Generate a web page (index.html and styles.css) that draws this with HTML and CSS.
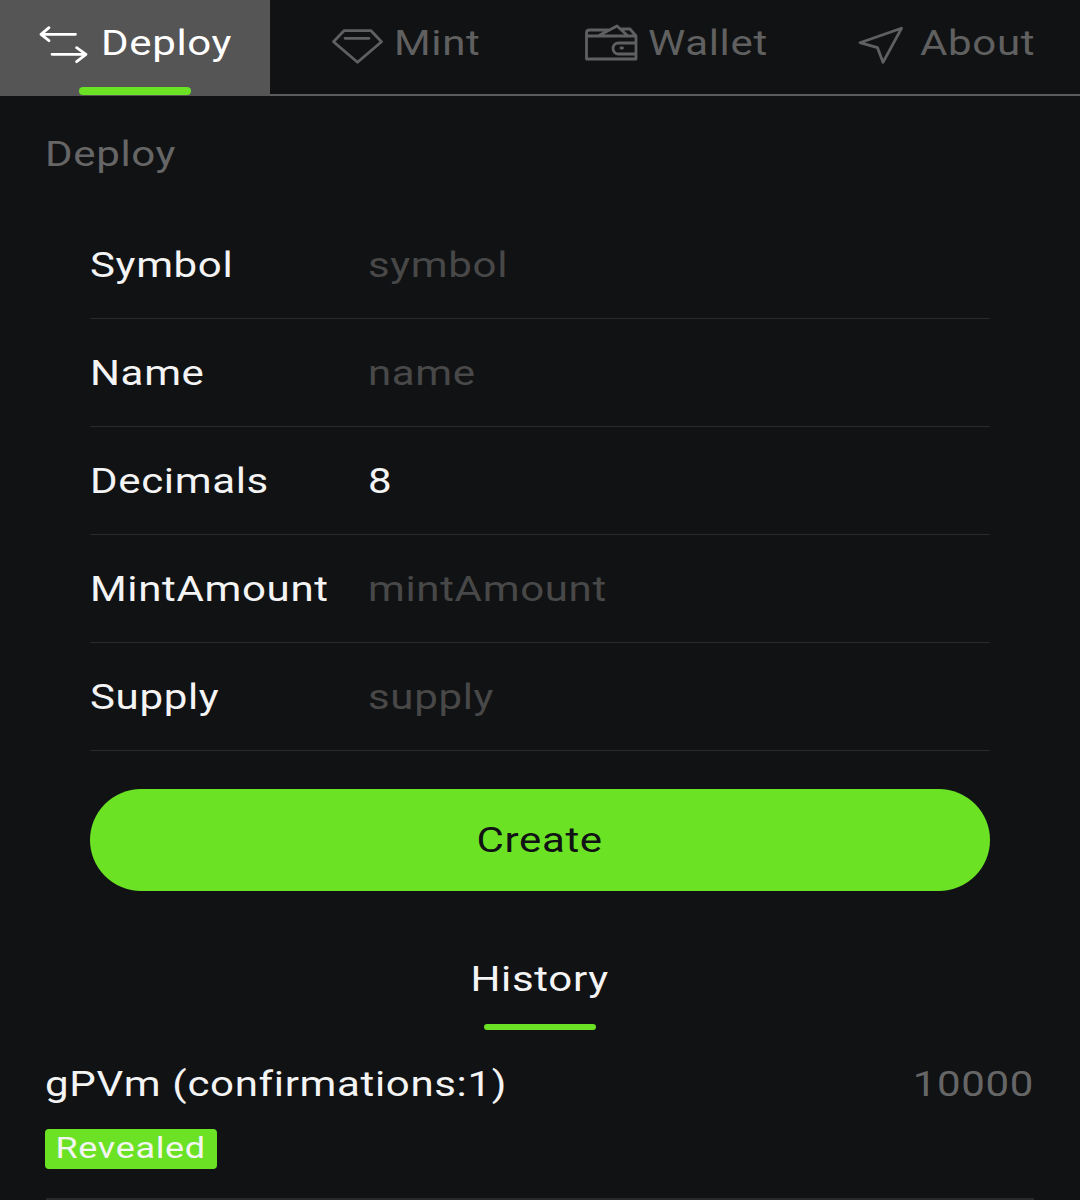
FILE: index.html
```html
<!DOCTYPE html>
<html lang="en">
<head>
<meta charset="utf-8">
<title>Deploy</title>
<link rel="stylesheet" href="styles.css">
</head>
<body>
<nav class="tabs">
  <a class="tab active">
    <svg class="icon" width="50" height="40" viewBox="0 0 50 40"><path d="M36.5 11.3H2M10 4.7L2 11.3L10 17.7M13 31.3H47M37.6 24.7L47 31.3L37.6 38.7"/></svg>
    <span class="wide">Deploy</span>
  </a>
  <a class="tab tab-mint">
    <svg class="icon" width="50" height="40" viewBox="0 0 50 40"><path d="M.5 18.7L11 7.7H38L48.5 18.7L24.5 39.3ZM12 15.3H36"/></svg>
    <span class="wide">Mint</span>
  </a>
  <a class="tab tab-wallet">
    <svg class="icon" width="52" height="40" viewBox="0 0 52 40"><path d="M1.5 13V10Q1.5 7 4.5 7H23M13 13L32 3L43 13M37 6H45L51 13M1.5 13V36H51V31M51 20V13H1.5M51 20H33.5A5.5 5.5 0 0 0 33.5 31H51ZM36 25H37.5"/></svg>
    <span class="wide">Wallet</span>
  </a>
  <a class="tab tab-about">
    <svg class="icon" width="50" height="40" viewBox="0 0 50 40"><path d="M2 19.7L43.5 5.3L25 39.3L19.5 24.7Z"/></svg>
    <span class="wide">About</span>
  </a>
</nav>

<h1 class="section-title"><span class="wide">Deploy</span></h1>

<form class="form">
  <label class="row"><span class="label"><span class="wide">Symbol</span></span><span class="wide placeholder">symbol</span></label>
  <label class="row"><span class="label"><span class="wide">Name</span></span><span class="wide placeholder">name</span></label>
  <label class="row"><span class="label"><span class="wide">Decimals</span></span><span class="wide value">8</span></label>
  <label class="row"><span class="label"><span class="wide">MintAmount</span></span><span class="wide placeholder">mintAmount</span></label>
  <label class="row"><span class="label"><span class="wide">Supply</span></span><span class="wide placeholder">supply</span></label>
  <button class="create" type="button"><span class="wide center">Create</span></button>
</form>

<div class="history-tab"><span class="wide center history-text">History</span><span class="bar"></span></div>

<section class="item">
  <div class="item-head"><span class="wide">gPVm (confirmations:1)</span><span class="wide end item-amount">10000</span></div>
  <span class="badge"><span class="wide center">Revealed</span></span>
</section>
</body>
</html>
```
FILE: styles.css
```css
* { box-sizing: border-box; }
html, body { margin: 0; height: 1200px; overflow: hidden; }
body {
  background: #111214;
  color: #f4f4f4;
  font-family: Roboto, "Liberation Sans", sans-serif;
  font-size: 35px;
  letter-spacing: 0.55px;
}
/* the reference's type is horizontally stretched */
.wide { display: inline-block; transform: scaleX(1.2); transform-origin: left center; }
.wide.center { transform-origin: center; }
.wide.end { transform-origin: right center; }
.tabs {
  display: grid;
  grid-template-columns: repeat(4, 1fr);
  height: 96px;
  border-bottom: 2px solid #5c5c5c;
}
.tab {
  position: relative;
  display: flex;
  align-items: center;
  justify-content: center;
  gap: 12px;
  height: 96px;
  padding: 0 20px 10px 0;
  color: #606060;
}
.tab-mint { padding-right: 11px; gap: 11px; }
.tab-wallet { padding-right: 17px; gap: 11px; }
.tab-about { padding-right: 17px; }
.tab.active { background: #555; color: #fff; }
.tab.active::after {
  content: "";
  position: absolute;
  left: 79px;
  bottom: 1px;
  width: 112px;
  height: 8px;
  border-radius: 4px;
  background: #6be224;
}
.icon { fill: none; stroke: currentColor; stroke-width: 2.8; stroke-linejoin: round; stroke-linecap: round; flex: none; overflow: visible; }
.section-title {
  margin: 0;
  padding: 39px 45px 36px;
  font-size: 35px;
  line-height: 40px;
  font-weight: 400;
  color: #666;
}
.form { padding: 0 90px; }
.row {
  display: flex;
  align-items: center;
  height: 108px;
  padding-top: 2px;
  border-bottom: 1px solid #2a2a2d;
}
.label { width: 278px; flex: none; }
.placeholder { color: #484848; }
.value { color: #f4f4f4; }
.create {
  display: block;
  width: 100%;
  height: 102px;
  margin-top: 38px;
  border: 0;
  border-radius: 51px;
  background: #6be224;
  color: #111214;
  font: inherit;
  letter-spacing: inherit;
}
.history-tab {
  display: flex;
  flex-direction: column;
  align-items: center;
  margin-top: 66px;
}
.history-text { line-height: 46px; }
.bar { width: 112px; height: 6px; margin-top: 21px; border-radius: 3px; background: #6be224; }
.item { padding: 32px 46px 0; }
.item-head { display: flex; justify-content: space-between; line-height: 46px; }
.item-head .wide:first-child { margin-left: -1px; }
.item-amount { color: #666; }
.badge {
  display: block;
  width: 172px;
  margin: 21px 0 0 -1px;
  height: 40px;
  line-height: 37px;
  text-align: center;
  font-size: 30px;
  border-radius: 4px;
  background: #6be224;
  color: #f4f4f4;
}
.item::after {
  content: "";
  display: block;
  height: 2px;
  margin-top: 29px;
  background: #2a2a2d;
}
```
